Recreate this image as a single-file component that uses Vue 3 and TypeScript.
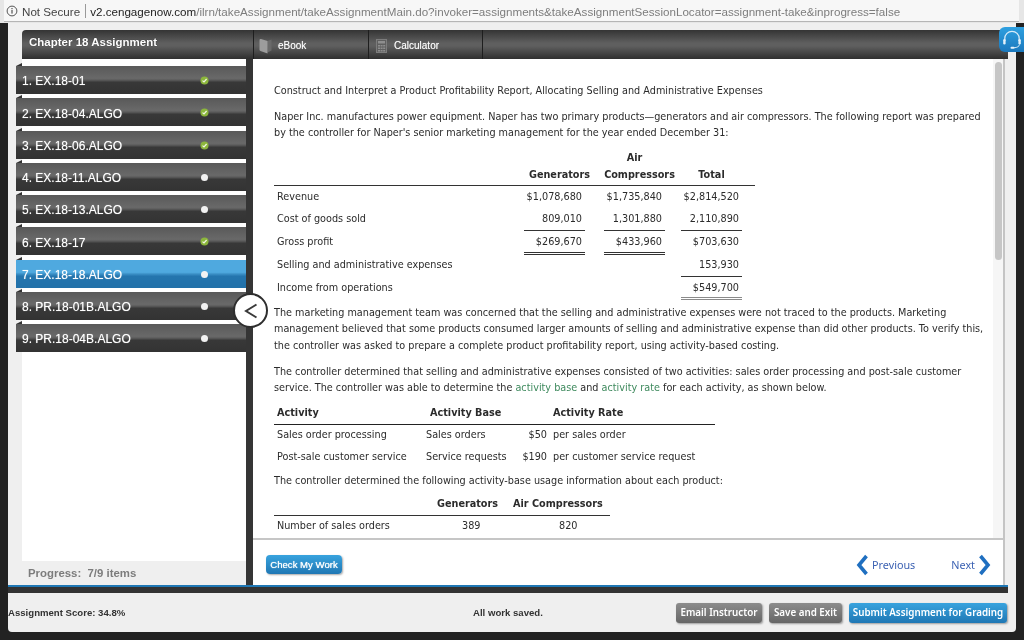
<script setup lang="ts">
interface Item { label: string; done: boolean; active?: boolean }
const items: Item[] = [
  { label: '1. EX.18-01', done: true },
  { label: '2. EX.18-04.ALGO', done: true },
  { label: '3. EX.18-06.ALGO', done: true },
  { label: '4. EX.18-11.ALGO', done: false },
  { label: '5. EX.18-13.ALGO', done: false },
  { label: '6. EX.18-17', done: true },
  { label: '7. EX.18-18.ALGO', done: false, active: true },
  { label: '8. PR.18-01B.ALGO', done: false },
  { label: '9. PR.18-04B.ALGO', done: false },
]
</script>

<template>
  <div class="page">
    <div class="urlbar">
      <div class="address">
        <svg class="info" width="12" height="12" viewBox="0 0 12 12">
          <circle cx="6" cy="6" r="4.9" fill="none" stroke="#555" stroke-width="1" />
          <rect x="5.4" y="5" width="1.2" height="3.6" fill="#555" />
          <rect x="5.4" y="3" width="1.2" height="1.2" fill="#555" />
        </svg>
        <span class="secure">Not Secure</span>
        <span class="pipe"></span>
        <span class="host">v2.cengagenow.com</span><span class="path">/ilrn/takeAssignment/takeAssignmentMain.do?invoker=assignments&amp;takeAssignmentSessionLocator=assignment-take&amp;inprogress=false</span>
      </div>
    </div>

    <div class="stage">
      <div class="panel">
        <header class="head">
          <div class="head-title">Chapter 18 Assignment</div>
          <div class="tab tab-book">
            <svg width="13" height="16" viewBox="0 0 13 16">
              <path d="M8.5 3 L12.5 1.5 V12.5 L8.5 14.5 Z" fill="#6a6a6a" />
              <path d="M0.5 2.2 Q0.5 0.6 2 1 L8.5 3 V15.5 L1.5 13 Q0.5 12.6 0.5 11.5 Z" fill="#9c9c9c" />
            </svg>
            <span>eBook</span>
          </div>
          <div class="tab tab-calc">
            <svg width="11" height="14" viewBox="0 0 11 14">
              <rect x="0.5" y="0.5" width="10" height="13" fill="#5f5f5f" stroke="#7c7c7c" />
              <rect x="2" y="2" width="7" height="2.5" fill="#8e8e8e" />
              <path d="M2 6h2v1.5H2zM4.6 6h2v1.5h-2zM7.2 6h2v1.5h-2zM2 8.5h2V10H2zM4.6 8.5h2V10h-2zM7.2 8.5h2V10h-2zM2 11h2v1.5H2zM4.6 11h2v1.5h-2zM7.2 11h2v1.5h-2z" fill="#8e8e8e" />
            </svg>
            <span>Calculator</span>
          </div>
        </header>

        <div class="body">
          <aside class="side">
            <div class="list">
              <div
                v-for="item in items"
                :key="item.label"
                class="item"
                :class="{ active: item.active }"
              >
                <span class="notch"></span>
                <span class="item-label">{{ item.label }}</span>
                <svg v-if="item.done" class="dot" width="9" height="9" viewBox="0 0 9 9">
                  <circle cx="4.5" cy="4.5" r="4" fill="#8cb63c" />
                  <path d="M2.5 4.6 L4 6 L6.6 3" fill="none" stroke="#f2f7e4" stroke-width="1.2" />
                </svg>
                <span v-else class="dot dot-open"></span>
              </div>
            </div>
            <div class="progress">Progress:&nbsp; 7/9 items</div>
          </aside>

          <main class="main">
            <div class="content">
              <div class="scroll">
                <p class="title">Construct and Interpret a Product Profitability Report, Allocating Selling and Administrative Expenses</p>
                <p class="intro">Naper Inc. manufactures power equipment. Naper has two primary products—generators and air compressors. The following report was prepared by the controller for Naper's senior marketing management for the year ended December 31:</p>

                <table class="report">
                  <thead>
                    <tr>
                      <th></th>
                      <th></th>
                      <th><div class="hd">Air</div></th>
                      <th></th>
                    </tr>
                    <tr class="rule">
                      <th></th>
                      <th><div class="hd g">Generators</div></th>
                      <th><div class="hd g">Compressors</div></th>
                      <th><div class="hd">Total</div></th>
                    </tr>
                  </thead>
                  <tbody>
                    <tr class="r1">
                      <td class="lbl">Revenue</td>
                      <td><div class="val">$1,078,680</div></td>
                      <td><div class="val">$1,735,840</div></td>
                      <td><div class="val">$2,814,520</div></td>
                    </tr>
                    <tr class="r2">
                      <td class="lbl">Cost of goods sold</td>
                      <td><div class="val single">809,010</div></td>
                      <td><div class="val single">1,301,880</div></td>
                      <td><div class="val single">2,110,890</div></td>
                    </tr>
                    <tr class="r3">
                      <td class="lbl">Gross profit</td>
                      <td><div class="val double">$269,670</div></td>
                      <td><div class="val double">$433,960</div></td>
                      <td><div class="val">$703,630</div></td>
                    </tr>
                    <tr class="r4">
                      <td class="lbl">Selling and administrative expenses</td>
                      <td></td>
                      <td></td>
                      <td><div class="val single">153,930</div></td>
                    </tr>
                    <tr class="r5">
                      <td class="lbl">Income from operations</td>
                      <td></td>
                      <td></td>
                      <td><div class="val double soft">$549,700</div></td>
                    </tr>
                  </tbody>
                </table>

                <p class="after-report">The marketing management team was concerned that the selling and administrative expenses were not traced to the products. Marketing management believed that some products consumed larger amounts of selling and administrative expense than did other products. To verify this, the controller was asked to prepare a complete product profitability report, using activity-based costing.</p>
                <p class="next-para">The controller determined that selling and administrative expenses consisted of two activities: sales order processing and post-sale customer service. The controller was able to determine the <a class="term">activity base</a> and <a class="term">activity rate</a> for each activity, as shown below.</p>

                <table class="activity">
                  <thead>
                    <tr>
                      <th class="a1 left">Activity</th>
                      <th class="a2 base-h">Activity Base</th>
                      <th class="a3"></th>
                      <th class="a4 left">Activity Rate</th>
                    </tr>
                  </thead>
                  <tbody>
                    <tr class="a-row">
                      <td class="a1">Sales order processing</td>
                      <td class="a2">Sales orders</td>
                      <td class="a3 num">$50</td>
                      <td class="a4">per sales order</td>
                    </tr>
                    <tr class="a-row">
                      <td class="a1">Post-sale customer service</td>
                      <td class="a2">Service requests</td>
                      <td class="a3 num">$190</td>
                      <td class="a4">per customer service request</td>
                    </tr>
                  </tbody>
                </table>

                <p class="usage">The controller determined the following activity-base usage information about each product:</p>

                <table class="usage-table">
                  <thead>
                    <tr>
                      <th class="u1"></th>
                      <th class="u2">Generators</th>
                      <th class="u3">Air Compressors</th>
                    </tr>
                  </thead>
                  <tbody>
                    <tr>
                      <td class="u1 pad">Number of sales orders</td>
                      <td class="u2 v2">389</td>
                      <td class="u3 v3">820</td>
                    </tr>
                  </tbody>
                </table>
              </div>
              <div class="scrollbar"><div class="thumb"></div></div>
            </div>

            <div class="actions">
              <button class="check">Check My Work</button>
              <nav class="pager">
                <svg width="13" height="22" viewBox="0 0 13 22">
                  <path d="M10.5 2 L3 11 L10.5 20" fill="none" stroke="#1f6fc0" stroke-width="3.6" />
                </svg>
                <span class="prev">Previous</span>
                <span class="next">Next</span>
                <svg width="13" height="22" viewBox="0 0 13 22">
                  <path d="M2.5 2 L10 11 L2.5 20" fill="none" stroke="#1f6fc0" stroke-width="3.6" />
                </svg>
              </nav>
            </div>
          </main>
        </div>

        <div class="band"></div>

        <footer class="foot">
          <div class="score">Assignment Score: 34.8%</div>
          <div class="saved">All work saved.</div>
          <div class="buttons">
            <button class="btn gray email">Email Instructor</button>
            <button class="btn gray exit">Save and Exit</button>
            <button class="btn blue submit">Submit Assignment for Grading</button>
          </div>
        </footer>

        <button class="collapse" aria-label="Collapse">
          <svg width="18" height="20" viewBox="0 0 18 20">
            <path d="M14.5 3.5 L4 10 L14.5 16.5" fill="none" stroke="#3a3a3a" stroke-width="2" />
          </svg>
        </button>
      </div>

      <div class="support">
        <svg width="22" height="22" viewBox="0 0 22 22">
          <path d="M3.8 12 V9.5 A7.2 7.2 0 0 1 18.2 9.5 V12" fill="none" stroke="#d6ebf8" stroke-width="1.3" />
          <rect x="2.2" y="10" width="2.4" height="5.5" rx="1.2" fill="#e4f1fa" />
          <rect x="17.4" y="10" width="2.4" height="5.5" rx="1.2" fill="#e4f1fa" />
          <path d="M18.5 15.5 Q18 18.4 13 18.8" fill="none" stroke="#d6ebf8" stroke-width="1" />
          <rect x="9.5" y="17.8" width="4" height="2" rx="1" fill="#e4f1fa" />
        </svg>
      </div>
    </div>
  </div>
</template>

<style>
html, body { margin: 0; padding: 0; background: #222; }
</style>

<style scoped>
.page {
  width: 1024px;
  height: 640px;
  overflow: hidden;
  display: flex;
  flex-direction: column;
  background: #222;
  font-family: "DejaVu Sans", sans-serif;
  color: #2b2b2b;
  filter: blur(0.3px);
}
.urlbar {
  height: 23px;
  flex: none;
  background: #e6e6e6;
  padding: 0 5px 0 4px;
  box-sizing: border-box;
}
.address {
  height: 22px;
  background: #f7f7f7;
  border-bottom: 1px solid #b5b5b5;
  box-sizing: border-box;
  display: flex;
  align-items: center;
  padding: 1px 0 0 2px;
  font: 11.63px "Liberation Sans", Arial, sans-serif;
  white-space: nowrap;
  overflow: hidden;
}
.info { margin-right: 4px; flex: none; }
.secure { color: #444; }
.pipe { width: 1px; height: 14px; background: #9a9a9a; margin: 0 4.5px; }
.host { color: #222; }
.path { color: #7d7d7d; }

.stage {
  flex: 1;
  min-height: 0;
  position: relative;
  padding: 0 8px 8px;
  display: flex;
}
.panel {
  flex: 1;
  position: relative;
  background: #efefef;
  display: flex;
  flex-direction: column;
  border-radius: 0 0 4px 4px;
  padding-top: 7px;
}
.head {
  height: 29px;
  flex: none;
  margin: 0 8px 0 14px;
  display: flex;
  border-radius: 4px 0 0 0;
  background: linear-gradient(#343434, #5f5f5f 45%, #5f5f5f 55%, #2f2f2f);
  color: #fff;
}
.head-title {
  width: 231px;
  box-sizing: border-box;
  padding: 6px 0 0 7px;
  font: bold 11.5px "Liberation Sans", Arial, sans-serif;
  text-shadow: 0 0 1px rgba(0, 0, 0, .6);
}
.tab {
  width: 115px;
  box-sizing: border-box;
  border-left: 1px solid #1e1e1e;
  display: flex;
  align-items: center;
  font: 10px "Liberation Sans", Arial, sans-serif;
  color: #fff;
  padding-top: 2px;
  text-shadow: 0 0 1px rgba(255, 255, 255, .5);
}
.tab-calc { border-right: 1px solid #1e1e1e; }
.tab-book svg { margin: 0 6px 0 5px; }
.tab-calc svg { margin: 0 7px 0 7px; }

.body {
  flex: 1;
  min-height: 0;
  display: flex;
  margin-right: 11px;
}
.side {
  width: 238px;
  flex: none;
  display: flex;
  flex-direction: column;
}
.list {
  flex: 1;
  margin-left: 14px;
  background: #fff;
  padding-top: 7px;
  display: flex;
  flex-direction: column;
  gap: 4.25px;
  position: relative;
}
.item {
  height: 28px;
  flex: none;
  margin-left: -6px;
  position: relative;
  display: flex;
  align-items: center;
  padding: 2.5px 0 0 6px;
  box-sizing: border-box;
  background: linear-gradient(#595959, #696969 44%, #5c5c5c 50%, #383838 58%, #333);
  color: #fff;
  font: 12px "Liberation Sans", Arial, sans-serif;
  text-shadow: 0 0 1px rgba(255, 255, 255, .6);
}
.item.active {
  background: linear-gradient(#4fa9df, #4fa9df 44%, #3b8fc6 50%, #2475ae 58%, #2271a9);
}
.notch {
  position: absolute;
  left: 0;
  top: -3px;
  width: 0;
  height: 0;
  border-bottom: 3px solid #333;
  border-left: 6px solid transparent;
}
.item-label { white-space: nowrap; }
.dot {
  position: absolute;
  left: 184px;
  top: 10px;
}
.dot-open {
  width: 7px;
  height: 7px;
  margin: 1px;
  border-radius: 50%;
  background: #f2f2f2;
}
.progress {
  height: 24px;
  flex: none;
  padding: 6px 0 0 20px;
  box-sizing: border-box;
  font: bold 11.4px "Liberation Sans", Arial, sans-serif;
  color: #7c7c7c;
}

.main {
  flex: 1;
  min-width: 0;
  border-left: 7px solid #353535;
  display: flex;
  flex-direction: column;
  background: #fff;
  box-shadow: inset -2px 0 0 #c4c4c4;
}
.content {
  height: 481px;
  flex: none;
  box-sizing: border-box;
  display: flex;
  margin-right: 2px;
  border-bottom: 2px solid #c6c6c6;
  overflow: hidden;
}
.scroll {
  flex: 1;
  min-width: 0;
  padding: 24px 8px 0 21px;
  font-size: 9.68px;
  line-height: 16.5px;
  color: #2b2b2b;
}
.scroll p { margin: 0; }
.intro { margin-top: 9px !important; }
.term { color: #3f8a5e; }
.after-report { margin-top: 5px !important; }
.next-para { margin-top: 9.5px !important; }
.usage { margin-top: 5px !important; }
.scrollbar {
  width: 10px;
  flex: none;
  background: #f6f6f6;
  padding: 3px 1px 0 2px;
  box-sizing: border-box;
}
.thumb {
  height: 198px;
  background: #c6c6c6;
  border-radius: 4px;
}

table { border-collapse: collapse; table-layout: fixed; }
th { font-weight: bold; padding: 0; }
td { padding: 0; }

.report {
  width: 481px;
  margin-top: 7px;
}
.report th:nth-child(1), .report td:nth-child(1) { width: 250px; }
.report th:nth-child(2), .report td:nth-child(2) { width: 61px; }
.report th:nth-child(3), .report td:nth-child(3) { width: 80px; padding-left: 19px; box-sizing: border-box; }
.report th:nth-child(4), .report td:nth-child(4) { width: 90px; padding: 0 13px 0 16px; box-sizing: border-box; }
.hd {
  display: flex;
  justify-content: center;
  white-space: nowrap;
  height: 17px;
  line-height: 17px;
}
.hd.g { padding-left: 10px; }
.rule { border-bottom: 1px solid #333; }
.rule .hd { height: 19px; line-height: 17px; }
.lbl { padding-left: 3px !important; }
.val {
  text-align: right;
  padding-right: 3px;
  box-sizing: border-box;
}
.report td { vertical-align: top; }
.r1 .lbl, .r1 .val { height: 21px; line-height: 22px; }
.r2 .lbl { line-height: 22px; }
.r2 .val { height: 23px; line-height: 22px; }
.r3 .lbl { line-height: 22px; }
.r3 .val { height: 24px; line-height: 22px; }
.r4 .lbl { line-height: 20px; }
.r4 .val { height: 22px; line-height: 20px; }
.r5 .lbl { line-height: 22px; }
.r5 .val { height: 23px; line-height: 22px; }
.single { border-bottom: 1px solid #333; }
.double { border-bottom: 3px double #333; }
.soft { border-bottom-color: #8a8a8a; }

.activity {
  width: 441px;
  margin-top: 8px;
}
.activity thead tr { border-bottom: 1px solid #222; }
.activity th { height: 19px; line-height: 16px; vertical-align: top; text-align: left; }
.a-row td { height: 21.5px; white-space: nowrap; }
.a1 { width: 148px; padding-left: 3px; box-sizing: border-box; }
.a2 { width: 100px; padding-left: 4px; box-sizing: border-box; }
.a3 { width: 25px; }
.a4 { width: 168px; padding-left: 6px; box-sizing: border-box; }
.activity th.a1 { padding-left: 3px; }
.activity th.a4 { padding-left: 6px; }
.base-h { padding-left: 8px !important; white-space: nowrap; }
.num { text-align: right; }

.usage-table {
  width: 336px;
  margin-top: 6.5px;
}
.usage-table thead tr { border-bottom: 1px solid #333; }
.usage-table th { height: 19px; line-height: 16px; vertical-align: top; white-space: nowrap; }
.u1 { width: 163px; }
.u2 { width: 60px; text-align: left; }
.u3 { width: 113px; text-align: left; padding-left: 16px !important; box-sizing: border-box; }
.pad { padding-left: 3px; box-sizing: border-box; height: 22px; }
.v2 { padding-left: 25px; }
.v3 { padding-left: 62px !important; }

.actions {
  flex: 1;
  min-height: 0;
  display: flex;
  align-items: center;
  justify-content: space-between;
  padding: 4px 14px 0 13px;
}
.check {
  width: 76px;
  height: 19px;
  padding: 0;
  border: 0;
  border-radius: 4px;
  background: linear-gradient(#38a3de, #1f77b4);
  color: #fff;
  font: 9.6px "Liberation Sans", Arial, sans-serif;
  text-shadow: 0 0 1px #fff;
  box-shadow: 1px 1px 2px rgba(0, 0, 0, .35);
  white-space: nowrap;
}
.pager {
  display: flex;
  align-items: center;
  font: 10.8px "Noto Sans", sans-serif;
  color: #3c62b3;
}
.prev { margin-left: 3px; }
.next { margin: 0 3px 0 36px; }

.band {
  height: 8px;
  flex: none;
  margin-right: 8px;
  background: #333;
  border-top: 2px solid #1f77b4;
  box-sizing: border-box;
}
.foot {
  height: 39px;
  flex: none;
  display: flex;
  align-items: center;
  padding-right: 9px;
  font: bold 9.6px "Liberation Sans", Arial, sans-serif;
  color: #333;
}
.score { width: 465px; flex: none; white-space: nowrap; }
.saved { white-space: nowrap; }
.buttons {
  margin-left: auto;
  display: flex;
  gap: 7px;
}
.btn {
  height: 20px;
  padding: 0;
  border: 0;
  border-radius: 3px;
  color: #fff;
  font: 600 9.8px "Noto Sans", sans-serif;
  white-space: nowrap;
  box-shadow: 1px 1px 2px rgba(0, 0, 0, .35);
}
.gray { background: linear-gradient(#8c8c8c, #666); }
.blue { background: linear-gradient(#38a3de, #1f77b4); }
.email { width: 86px; }
.exit { width: 73px; }
.submit { width: 158px; }

.collapse {
  position: absolute;
  left: 225px;
  top: 270px;
  width: 35px;
  height: 35px;
  padding: 0;
  box-sizing: border-box;
  border: 2px solid #2e2e2e;
  border-radius: 50%;
  background: #fff;
  display: flex;
  align-items: center;
  justify-content: center;
}
.support {
  position: absolute;
  right: 0;
  top: 4px;
  width: 25px;
  height: 25px;
  border-radius: 6px 0 0 6px;
  background: linear-gradient(#2ea0e0, #1b78bd);
  display: flex;
  align-items: center;
  justify-content: center;
}
</style>
